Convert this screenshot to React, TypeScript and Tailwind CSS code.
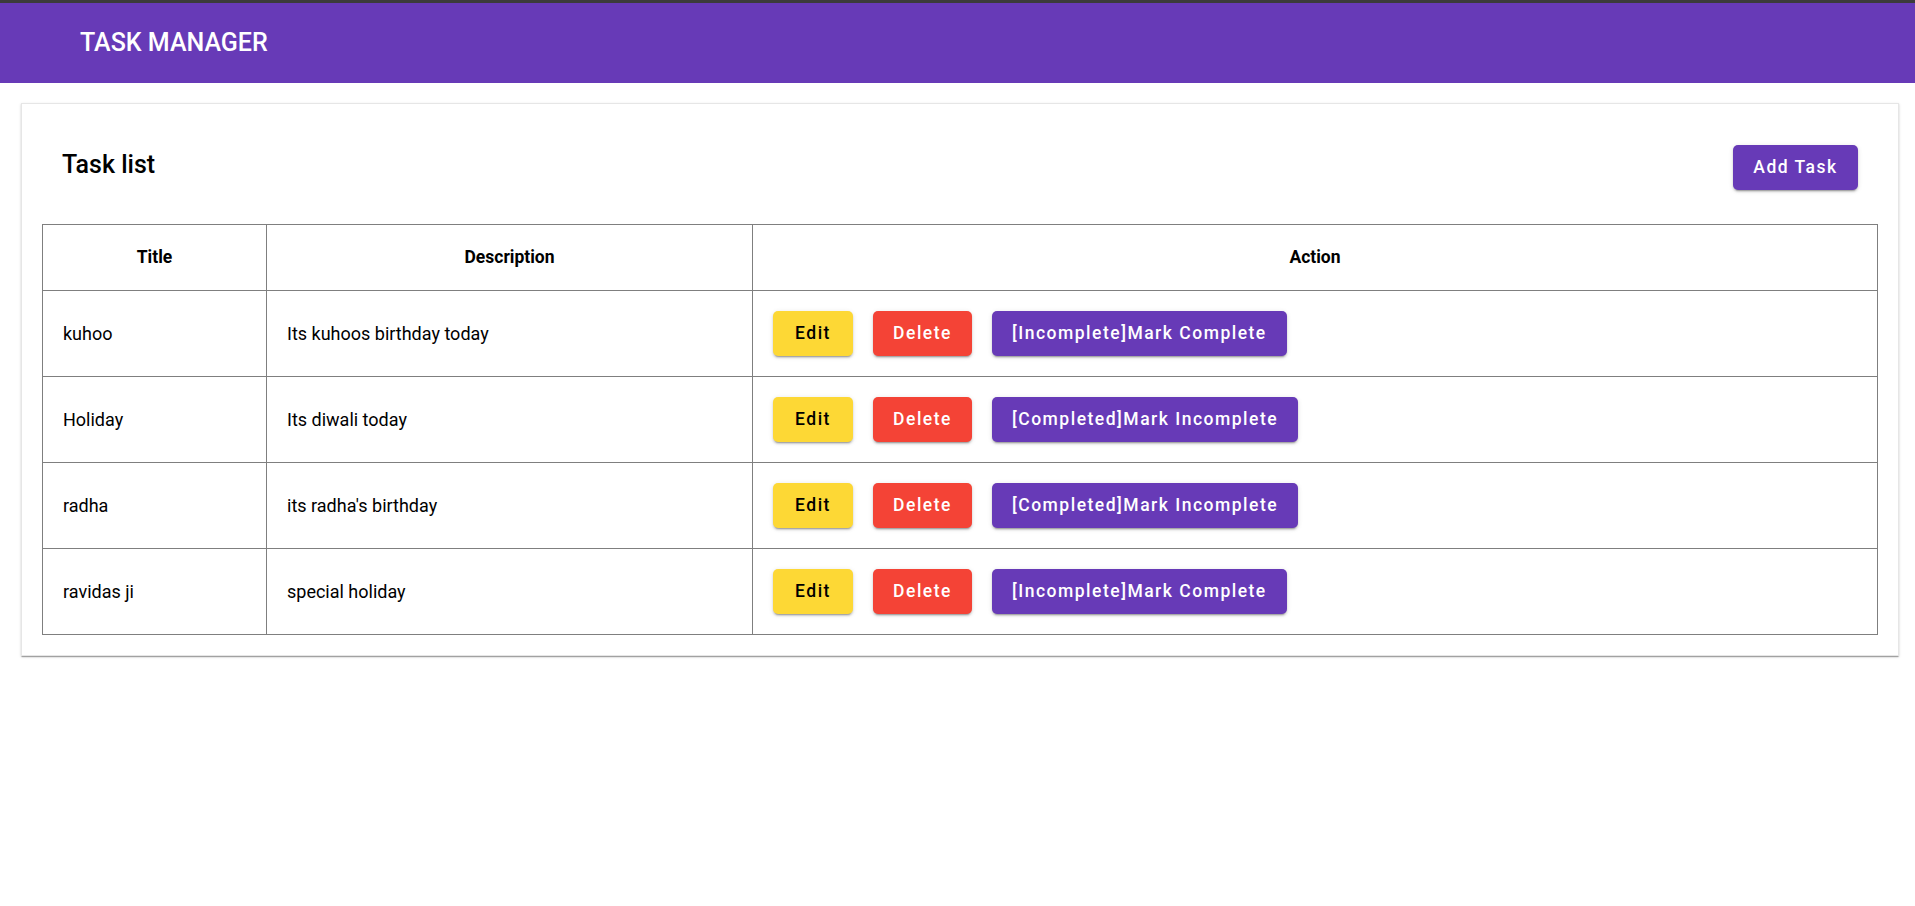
import React from "react";

type Task = {
  title: string;
  description: string;
  completed: boolean;
};

const tasks: Task[] = [
  { title: "kuhoo", description: "Its kuhoos birthday today", completed: false },
  { title: "Holiday", description: "Its diwali today", completed: true },
  { title: "radha", description: "its radha's birthday", completed: true },
  { title: "ravidas ji", description: "special holiday", completed: false },
];

const btn =
  "h-[45px] px-5 rounded-[5px] text-[17.5px] font-medium tracking-[1.5px] leading-none shadow-[0_3px_1px_-2px_rgba(0,0,0,0.2),0_2px_2px_0_rgba(0,0,0,0.14),0_1px_5px_0_rgba(0,0,0,0.12)]";

const cell = "border border-[#7f7f7f] px-5 py-5 text-[18px] text-black";
const head = "border border-[#7f7f7f] px-5 py-5 text-center text-[17.5px] font-bold leading-[25px] text-black";

function TaskRow({ task }: { task: Task }) {
  return (
    <tr>
      <td className={cell}>{task.title}</td>
      <td className={cell}>{task.description}</td>
      <td className="border border-[#7f7f7f] px-5 py-5">
        <div className="flex items-center gap-5">
          <button className={`${btn} w-[80px] bg-[#fdd835] text-black`}>Edit</button>
          <button className={`${btn} w-[99px] bg-[#f44336] text-white`}>Delete</button>
          <button className={`${btn} bg-[#673ab7] text-white`}>
            {task.completed ? "[Completed]Mark Incomplete" : "[Incomplete]Mark Complete"}
          </button>
        </div>
      </td>
    </tr>
  );
}

export default function App() {
  return (
    <div className="min-h-screen bg-white font-['Roboto',sans-serif]">
      {/* top bar */}
      <div className="h-[3px] bg-[#3b3b3b]" />
      <header className="flex h-[80px] items-center bg-[#673ab7] pl-20">
        <h1 className="text-[25px] font-medium text-white">TASK MANAGER</h1>
      </header>

      <main className="ml-[21px] mr-4 mt-5 border border-[#e6e6e6] bg-white p-5 shadow-[0_2px_1px_-1px_rgba(0,0,0,0.2),0_1px_1px_0_rgba(0,0,0,0.14),0_1px_3px_0_rgba(0,0,0,0.12)]">
        <div className="flex items-center justify-between px-5 pt-[21px] pb-[34px]">
          <h2 className="mb-[6px] text-[25px] font-medium leading-none text-black">Task list</h2>
          <button className={`${btn} w-[125px] bg-[#673ab7] text-white`}>Add Task</button>
        </div>

        <table className="w-full border-collapse">
          <colgroup>
            <col className="w-[224px]" />
            <col className="w-[486px]" />
            <col />
          </colgroup>
          <thead>
            <tr>
              <th className={head}>Title</th>
              <th className={head}>Description</th>
              <th className={head}>Action</th>
            </tr>
          </thead>
          <tbody>
            {tasks.map((t) => (
              <TaskRow key={t.title} task={t} />
            ))}
          </tbody>
        </table>
      </main>
    </div>
  );
}
